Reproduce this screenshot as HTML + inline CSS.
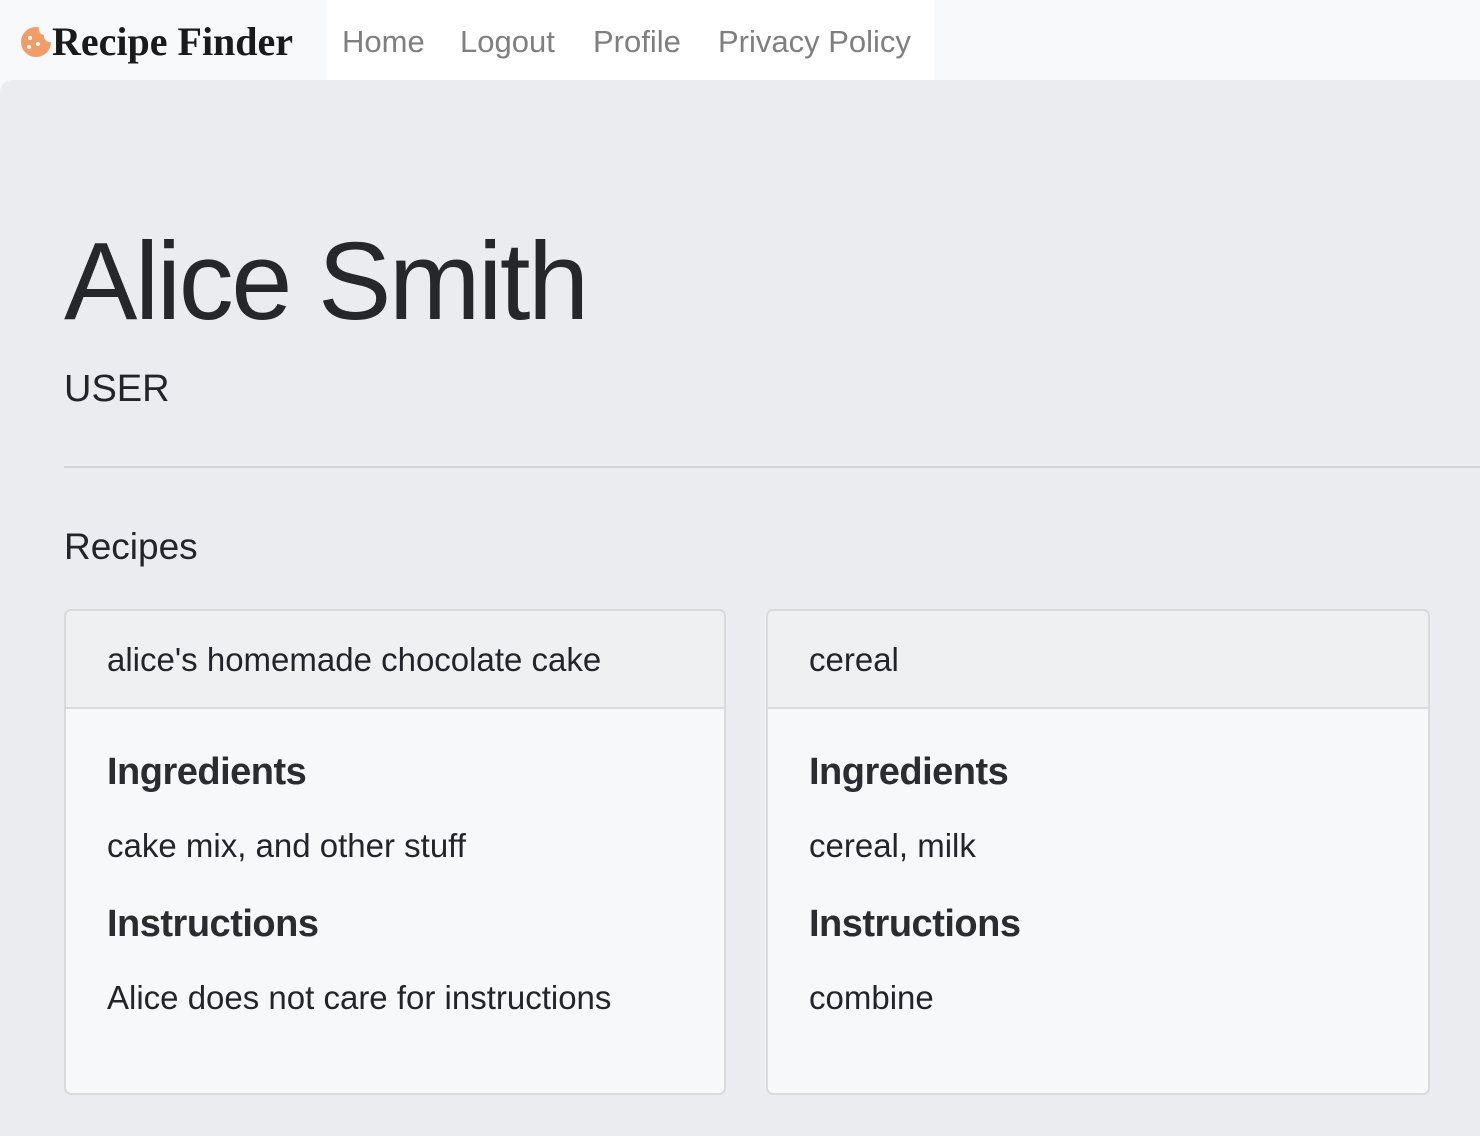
<!DOCTYPE html>
<html><head><style>
body{margin:0;width:1480px;height:1136px;overflow:hidden;background:#f8f9fa;font-family:"Liberation Sans",sans-serif;color:#212529;position:relative}
.nav{position:absolute;top:0;left:0;width:1480px;height:80px;background:#f8f9fa}
.brand{position:absolute;left:20px;top:18px;font:bold 40px "Liberation Serif",serif;color:#1a1a1a;display:flex;align-items:center}
.links{position:absolute;left:326px;top:0;width:608px;height:80px;background:#fff}
.links span{position:absolute;top:24px;font-size:31px;color:#7f7f7f}
.main{position:absolute;top:80px;left:0;width:1480px;height:1056px;background:#ebecf0;border-top-left-radius:12px}
.t{position:absolute;white-space:nowrap}
.card{position:absolute;top:609px;width:658px;height:482px;border:2px solid #d8dadd;border-radius:7px;background:#f7f8fa;overflow:hidden}
.card .h{height:96px;background:#eff0f2;border-bottom:2px solid #d8dadd}
.card .t{left:41px}
.b{font-size:33px}
.hd{font-size:38px;font-weight:bold;color:#2a2c30;letter-spacing:-0.5px}
</style></head><body>
<div class="nav">
<div class="brand"><svg width="32" height="32" viewBox="0 0 32 32"><path d="M16 1 A15 15 0 1 0 31 16 A6 6 0 0 1 24 9 A6 6 0 0 1 19 1.3 Z" fill="#f29c67"/><circle cx="10" cy="12" r="2" fill="#fff"/><circle cx="9" cy="21" r="2" fill="#fff"/><circle cx="18" cy="18" r="2" fill="#fff"/></svg>Recipe Finder</div>
<div class="links"><span style="left:16px">Home</span><span style="left:134px">Logout</span><span style="left:267px">Profile</span><span style="left:392px">Privacy Policy</span></div>
</div>
<div class="main">
<div class="t" style="left:64px;top:138px;font-size:110px;letter-spacing:-2.5px;color:#25272b">Alice Smith</div>
<div class="t" style="left:64px;top:288px;font-size:38px">USER</div>
<div style="position:absolute;left:64px;top:386px;width:1416px;height:2px;background:#d3d5d8"></div>
<div class="t" style="left:64px;top:446px;font-size:37px">Recipes</div>
</div>
<div class="card" style="left:64px"><div class="h"></div>
<div class="t b" style="top:30px">alice's homemade chocolate cake</div>
<div class="t hd" style="top:140px">Ingredients</div>
<div class="t b" style="top:216px">cake mix, and other stuff</div>
<div class="t hd" style="top:292px">Instructions</div>
<div class="t b" style="top:368px">Alice does not care for instructions</div>
</div>
<div class="card" style="left:766px;width:660px"><div class="h"></div>
<div class="t b" style="top:30px">cereal</div>
<div class="t hd" style="top:140px">Ingredients</div>
<div class="t b" style="top:216px">cereal, milk</div>
<div class="t hd" style="top:292px">Instructions</div>
<div class="t b" style="top:368px">combine</div>
</div>
</body></html>
